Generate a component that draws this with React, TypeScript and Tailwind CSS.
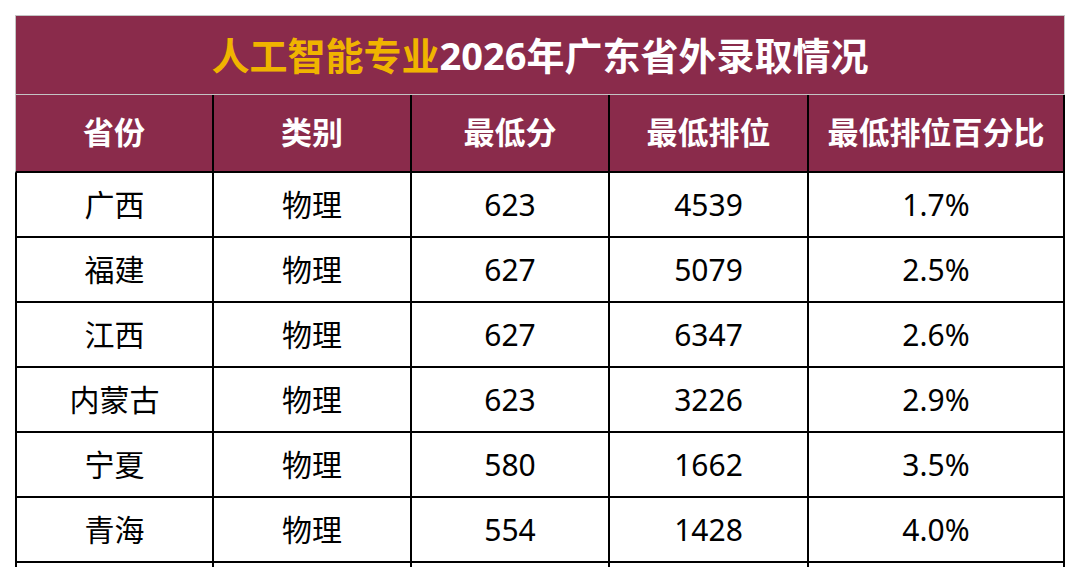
import React from "react";

const rows = [
  ["广西", "物理", "623", "4539", "1.7%"],
  ["福建", "物理", "627", "5079", "2.5%"],
  ["江西", "物理", "627", "6347", "2.6%"],
  ["内蒙古", "物理", "623", "3226", "2.9%"],
  ["宁夏", "物理", "580", "1662", "3.5%"],
  ["青海", "物理", "554", "1428", "4.0%"],
  ["", "", "", "", ""],
];

const headers = ["省份", "类别", "最低分", "最低排位", "最低排位百分比"];

const font = { fontFamily: '"Noto Sans", "Noto Sans CJK SC", sans-serif' };

export default function App() {
  return (
    <div className="h-[567px] w-[1080px] overflow-hidden bg-white pl-[15px] pt-[15px]" style={font}>
      <div className="w-[1050px]">
        <div className="flex h-[80px] items-center justify-center border border-[#c4c4c4] bg-[#8a2b4b] text-[38px] font-bold leading-none">
          <span className="text-[#f0b400]">人工智能专业</span>
          <span className="text-white">2026年广东省外录取情况</span>
        </div>
        <div className="grid h-[78px] grid-cols-[199px_198px_198px_199px_256px] bg-[#8a2b4b] text-[31px] font-bold leading-none text-white">
          {headers.map((h, i) => (
            <div
              key={h}
              className={
                "flex items-center justify-center border-b-2 border-r-2 border-black pb-[2px] " +
                (i === 0 ? "border-l border-l-[#c4c4c4]" : "")
              }
            >
              {h}
            </div>
          ))}
        </div>
        {rows.map((r, ri) => (
          <div
            key={ri}
            className="grid h-[65px] grid-cols-[199px_198px_198px_199px_256px] text-[30px] leading-none text-black"
          >
            {r.map((c, ci) => (
              <div
                key={ci}
                className={
                  "flex items-center justify-center border-b-2 border-r-2 border-black " +
                  (ci === 0 ? "border-l-2" : "")
                }
              >
                {c}
              </div>
            ))}
          </div>
        ))}
      </div>
    </div>
  );
}
